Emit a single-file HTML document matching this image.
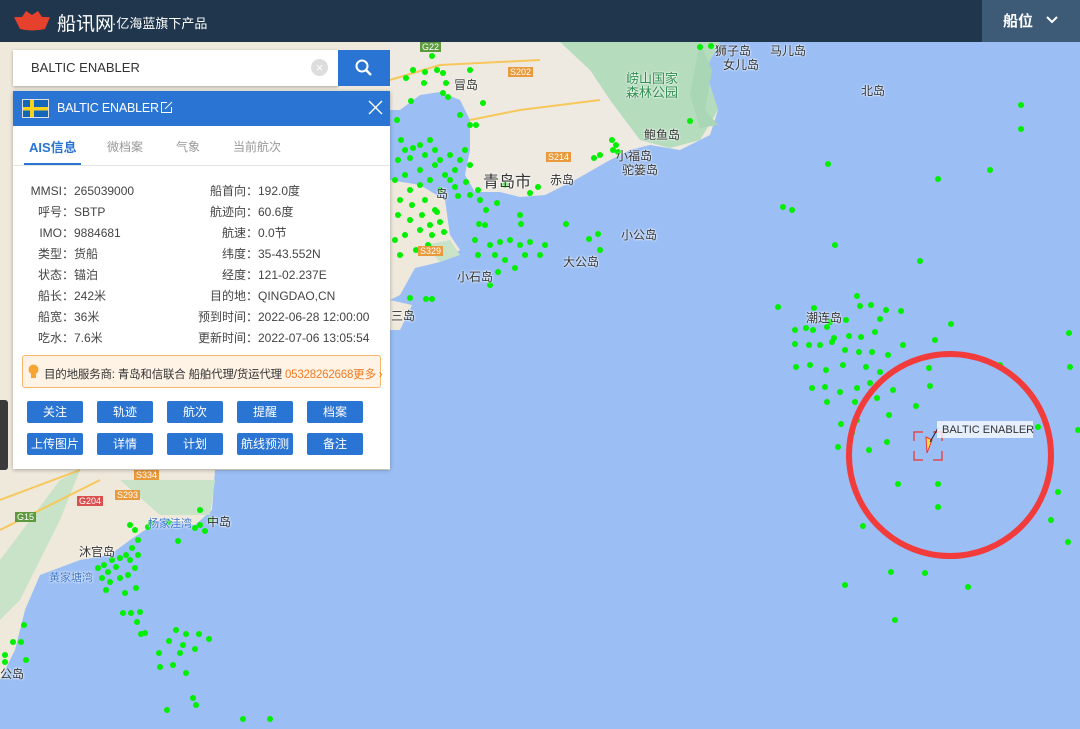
<!DOCTYPE html>
<html><head><meta charset="utf-8"><style>
*{margin:0;padding:0;box-sizing:border-box}
body{width:1080px;height:729px;overflow:hidden;position:relative;font-family:"Liberation Sans","Noto Sans CJK SC",sans-serif;background:#9bbff5}
#top{position:absolute;left:0;top:0;width:1080px;height:42px;background:#1f364c}
#map{position:absolute;left:0;top:42px}
.abs{position:absolute}
.lbl{position:absolute;font-size:12px;color:#333;text-shadow:0 0 2px #fff,0 0 2px #fff}
.btn{position:absolute;width:56px;height:22px;background:#2a74d4;color:#fff;font-size:12px;text-align:center;line-height:22px;border-radius:2px}
.row{position:absolute;font-size:12px;color:#444;white-space:nowrap}
</style></head><body>
<div id="top">
 <svg class="abs" style="left:12px;top:9px" width="40" height="22"><path d="M2 8 L10 8 L14 2 L20 6 L26 2 L30 8 L38 8 L33 20 Q20 23 8 20 Z" fill="#e5412d"/></svg>
 <div class="abs" style="left:57px;top:9px;color:#fff;font-size:19px">船讯网</div>
 <div class="abs" style="left:112px;top:13px;color:#fff;font-size:13px">·亿海蓝旗下产品</div>
 <div class="abs" style="left:982px;top:0;width:98px;height:42px;background:#3d5a76"></div>
 <div class="abs" style="left:1003px;top:10px;color:#fff;font-size:15px;font-weight:bold">船位</div>
 <svg class="abs" style="left:1045px;top:15px" width="14" height="10"><path d="M2 2 L7 7 L12 2" stroke="#fff" stroke-width="2" fill="none"/></svg>
</div>
<svg id="map" width="1080" height="687" viewBox="0 42 1080 687">
 <rect x="0" y="42" width="1080" height="687" fill="#9bbff5"/>
 <path d="M0 42 L390 42 L390 300 L412 305 L400 330 L390 330 L390 470 L215 470 L212 510 L195 525 L160 520 L130 540 L110 555 L80 560 L40 575 L25 610 L15 650 L0 680 Z" fill="#efe9dc"/>
 <path d="M0 560 L30 520 L60 480 L80 470 L60 520 L40 560 L20 600 L0 620Z" fill="#c8e3c8"/>
 <path d="M120 480 L215 480 L210 515 L160 515 Z" fill="#c8e3c8"/>
 <path d="M390 42 L720 42 L705 70 L718 110 L710 135 L680 150 L650 145 L630 150 L610 160 L575 180 L545 195 L520 197 L500 192 L475 192 L465 175 L470 150 L470 120 L460 100 L440 92 L420 95 L400 110 L390 110 Z" fill="#eeeae2"/>
 <path d="M560 42 L720 42 L705 70 L718 110 L700 140 L670 148 L640 140 L610 100 L590 70 Z" fill="#b5dcbc"/>
 <path d="M390 180 L420 185 L445 200 L450 235 L460 250 L440 262 L415 268 L400 295 L390 300Z" fill="#efe9dc"/>
 <path d="M425 245 L450 240 L460 255 L440 262 Z" fill="#c8e3c8"/>
 <path d="M700 42 L712 70 L705 110 L718 125 L700 128 L690 95Z" fill="#a9d6b4"/>
 <path d="M470 120 L520 110 L600 100" stroke="#f6c75a" stroke-width="2" fill="none"/>
 <path d="M390 80 L440 65 L540 60" stroke="#f6c75a" stroke-width="2" fill="none"/>
 <path d="M0 500 L80 470 M0 530 L100 480" stroke="#f6c75a" stroke-width="2" fill="none"/>
 <g fill="#00f000">
 <circle cx="413" cy="70" r="3"/><circle cx="425" cy="72" r="3"/><circle cx="437" cy="70" r="3"/><circle cx="443" cy="73" r="3"/><circle cx="406" cy="78" r="3"/><circle cx="424" cy="83" r="3"/><circle cx="470" cy="70" r="3"/><circle cx="432" cy="56" r="3"/><circle cx="443" cy="93" r="3"/><circle cx="448" cy="97" r="3"/><circle cx="446" cy="83" r="3"/><circle cx="411" cy="101" r="3"/><circle cx="483" cy="103" r="3"/><circle cx="476" cy="125" r="3"/><circle cx="460" cy="115" r="3"/><circle cx="470" cy="125" r="3"/><circle cx="397" cy="120" r="3"/><circle cx="401" cy="140" r="3"/><circle cx="405" cy="150" r="3"/><circle cx="413" cy="148" r="3"/><circle cx="420" cy="145" r="3"/><circle cx="430" cy="140" r="3"/><circle cx="435" cy="150" r="3"/><circle cx="425" cy="155" r="3"/><circle cx="410" cy="158" r="3"/><circle cx="398" cy="160" r="3"/><circle cx="440" cy="160" r="3"/><circle cx="450" cy="155" r="3"/><circle cx="460" cy="160" r="3"/><circle cx="465" cy="150" r="3"/><circle cx="455" cy="170" r="3"/><circle cx="445" cy="175" r="3"/><circle cx="470" cy="165" r="3"/><circle cx="435" cy="165" r="3"/><circle cx="420" cy="170" r="3"/><circle cx="405" cy="175" r="3"/><circle cx="395" cy="180" r="3"/><circle cx="410" cy="190" r="3"/><circle cx="420" cy="185" r="3"/><circle cx="430" cy="180" r="3"/><circle cx="440" cy="190" r="3"/><circle cx="400" cy="200" r="3"/><circle cx="412" cy="205" r="3"/><circle cx="425" cy="200" r="3"/><circle cx="435" cy="210" r="3"/><circle cx="398" cy="215" r="3"/><circle cx="410" cy="220" r="3"/><circle cx="422" cy="215" r="3"/><circle cx="430" cy="225" r="3"/><circle cx="440" cy="222" r="3"/><circle cx="420" cy="230" r="3"/><circle cx="405" cy="235" r="3"/><circle cx="395" cy="240" r="3"/><circle cx="432" cy="235" r="3"/><circle cx="444" cy="232" r="3"/><circle cx="428" cy="245" r="3"/><circle cx="416" cy="250" r="3"/><circle cx="400" cy="255" r="3"/><circle cx="437" cy="212" r="3"/><circle cx="455" cy="187" r="3"/><circle cx="458" cy="196" r="3"/><circle cx="466" cy="182" r="3"/><circle cx="478" cy="190" r="3"/><circle cx="485" cy="225" r="3"/><circle cx="470" cy="195" r="3"/><circle cx="497" cy="203" r="3"/><circle cx="505" cy="185" r="3"/><circle cx="530" cy="193" r="3"/><circle cx="538" cy="187" r="3"/><circle cx="475" cy="240" r="3"/><circle cx="478" cy="255" r="3"/><circle cx="490" cy="245" r="3"/><circle cx="500" cy="242" r="3"/><circle cx="510" cy="240" r="3"/><circle cx="495" cy="255" r="3"/><circle cx="505" cy="260" r="3"/><circle cx="520" cy="245" r="3"/><circle cx="530" cy="242" r="3"/><circle cx="545" cy="245" r="3"/><circle cx="525" cy="255" r="3"/><circle cx="540" cy="255" r="3"/><circle cx="515" cy="268" r="3"/><circle cx="498" cy="272" r="3"/><circle cx="490" cy="285" r="3"/><circle cx="479" cy="224" r="3"/><circle cx="486" cy="210" r="3"/><circle cx="450" cy="180" r="3"/><circle cx="520" cy="215" r="3"/><circle cx="521" cy="224" r="3"/><circle cx="566" cy="224" r="3"/><circle cx="589" cy="239" r="3"/><circle cx="598" cy="234" r="3"/><circle cx="600" cy="250" r="3"/><circle cx="480" cy="200" r="3"/><circle cx="410" cy="298" r="3"/><circle cx="426" cy="299" r="3"/><circle cx="432" cy="299" r="3"/><circle cx="612" cy="140" r="3"/><circle cx="616" cy="145" r="3"/><circle cx="613" cy="150" r="3"/><circle cx="618" cy="152" r="3"/><circle cx="600" cy="155" r="3"/><circle cx="594" cy="158" r="3"/><circle cx="700" cy="47" r="3"/><circle cx="711" cy="46" r="3"/><circle cx="690" cy="121" r="3"/>
 <circle cx="1021" cy="105" r="3"/><circle cx="1021" cy="129" r="3"/><circle cx="828" cy="164" r="3"/><circle cx="938" cy="179" r="3"/><circle cx="990" cy="170" r="3"/><circle cx="783" cy="207" r="3"/><circle cx="792" cy="210" r="3"/><circle cx="835" cy="245" r="3"/><circle cx="920" cy="261" r="3"/>
 <circle cx="778" cy="307" r="3"/><circle cx="814" cy="308" r="3"/><circle cx="857" cy="296" r="3"/><circle cx="860" cy="306" r="3"/><circle cx="871" cy="305" r="3"/><circle cx="886" cy="310" r="3"/><circle cx="901" cy="311" r="3"/><circle cx="880" cy="319" r="3"/><circle cx="846" cy="320" r="3"/><circle cx="830" cy="322" r="3"/><circle cx="795" cy="330" r="3"/><circle cx="806" cy="328" r="3"/><circle cx="813" cy="330" r="3"/><circle cx="827" cy="327" r="3"/><circle cx="834" cy="338" r="3"/><circle cx="849" cy="336" r="3"/><circle cx="861" cy="337" r="3"/><circle cx="875" cy="332" r="3"/><circle cx="903" cy="345" r="3"/><circle cx="935" cy="340" r="3"/><circle cx="951" cy="324" r="3"/><circle cx="795" cy="344" r="3"/><circle cx="809" cy="345" r="3"/><circle cx="820" cy="345" r="3"/><circle cx="832" cy="342" r="3"/><circle cx="845" cy="350" r="3"/><circle cx="859" cy="352" r="3"/><circle cx="872" cy="352" r="3"/><circle cx="888" cy="355" r="3"/><circle cx="796" cy="367" r="3"/><circle cx="810" cy="365" r="3"/><circle cx="826" cy="370" r="3"/><circle cx="843" cy="365" r="3"/><circle cx="866" cy="367" r="3"/><circle cx="880" cy="372" r="3"/><circle cx="812" cy="388" r="3"/><circle cx="825" cy="387" r="3"/><circle cx="840" cy="392" r="3"/><circle cx="857" cy="388" r="3"/><circle cx="870" cy="383" r="3"/><circle cx="893" cy="390" r="3"/><circle cx="827" cy="402" r="3"/><circle cx="855" cy="402" r="3"/><circle cx="877" cy="398" r="3"/><circle cx="929" cy="368" r="3"/><circle cx="930" cy="386" r="3"/><circle cx="1000" cy="365" r="3"/><circle cx="1069" cy="333" r="3"/><circle cx="1070" cy="367" r="3"/><circle cx="889" cy="415" r="3"/><circle cx="916" cy="406" r="3"/><circle cx="841" cy="424" r="3"/><circle cx="857" cy="420" r="3"/><circle cx="852" cy="433" r="3"/><circle cx="869" cy="450" r="3"/><circle cx="887" cy="442" r="3"/><circle cx="838" cy="447" r="3"/><circle cx="1038" cy="427" r="3"/><circle cx="898" cy="484" r="3"/><circle cx="938" cy="484" r="3"/><circle cx="938" cy="507" r="3"/><circle cx="863" cy="526" r="3"/><circle cx="1058" cy="492" r="3"/><circle cx="1051" cy="520" r="3"/><circle cx="1068" cy="542" r="3"/><circle cx="1078" cy="430" r="3"/><circle cx="891" cy="572" r="3"/><circle cx="925" cy="573" r="3"/><circle cx="968" cy="587" r="3"/><circle cx="895" cy="620" r="3"/><circle cx="845" cy="585" r="3"/>
 <circle cx="130" cy="525" r="3"/><circle cx="135" cy="530" r="3"/><circle cx="138" cy="540" r="3"/><circle cx="132" cy="548" r="3"/><circle cx="126" cy="555" r="3"/><circle cx="130" cy="560" r="3"/><circle cx="135" cy="568" r="3"/><circle cx="128" cy="575" r="3"/><circle cx="120" cy="558" r="3"/><circle cx="112" cy="560" r="3"/><circle cx="104" cy="565" r="3"/><circle cx="98" cy="568" r="3"/><circle cx="108" cy="572" r="3"/><circle cx="116" cy="567" r="3"/><circle cx="102" cy="578" r="3"/><circle cx="110" cy="582" r="3"/><circle cx="120" cy="578" r="3"/><circle cx="106" cy="590" r="3"/><circle cx="138" cy="555" r="3"/><circle cx="148" cy="527" r="3"/><circle cx="151" cy="523" r="3"/><circle cx="168" cy="522" r="3"/><circle cx="178" cy="541" r="3"/><circle cx="195" cy="528" r="3"/><circle cx="200" cy="525" r="3"/><circle cx="205" cy="531" r="3"/><circle cx="210" cy="520" r="3"/><circle cx="200" cy="510" r="3"/><circle cx="136" cy="588" r="3"/><circle cx="125" cy="593" r="3"/><circle cx="123" cy="613" r="3"/><circle cx="140" cy="612" r="3"/><circle cx="131" cy="613" r="3"/><circle cx="137" cy="622" r="3"/><circle cx="141" cy="634" r="3"/><circle cx="145" cy="633" r="3"/><circle cx="176" cy="630" r="3"/><circle cx="186" cy="634" r="3"/><circle cx="199" cy="634" r="3"/><circle cx="209" cy="639" r="3"/><circle cx="169" cy="641" r="3"/><circle cx="183" cy="645" r="3"/><circle cx="195" cy="649" r="3"/><circle cx="159" cy="653" r="3"/><circle cx="160" cy="667" r="3"/><circle cx="173" cy="665" r="3"/><circle cx="180" cy="653" r="3"/><circle cx="186" cy="673" r="3"/><circle cx="193" cy="698" r="3"/><circle cx="196" cy="705" r="3"/><circle cx="167" cy="710" r="3"/><circle cx="243" cy="719" r="3"/><circle cx="270" cy="719" r="3"/><circle cx="24" cy="625" r="3"/><circle cx="21" cy="642" r="3"/><circle cx="13" cy="642" r="3"/><circle cx="26" cy="660" r="3"/><circle cx="5" cy="655" r="3"/><circle cx="5" cy="662" r="3"/>
 </g>
 <circle cx="950" cy="455" r="101" fill="none" stroke="#f23c3c" stroke-width="6"/>
 <path d="M914 441 V432 H923 M933 432 H942 V441 M942 451 V460 H933 M923 460 H914 V451" stroke="#e14a4a" stroke-width="1.5" fill="none"/>
 <path d="M926 437 L932 440 L927 453 Z" fill="#ffe14a" stroke="#e33" stroke-width="1"/>
 <path d="M930 442 L938 428" stroke="#222" stroke-width="1"/>
 <rect x="937" y="421" width="96" height="17" fill="#fff" fill-opacity=".75"/>
 <text x="942" y="433" font-size="11" fill="#333" font-family="Liberation Sans">BALTIC ENABLER</text>
</svg>
<div class="lbl" style="left:454px;top:76px">冒岛</div>
<div class="lbl" style="left:483px;top:168px;font-size:16px">青岛市</div>
<div class="lbl" style="left:550px;top:171px">赤岛</div>
<div class="lbl" style="left:436px;top:185px">岛</div>
<div class="lbl" style="left:621px;top:226px">小公岛</div>
<div class="lbl" style="left:563px;top:253px">大公岛</div>
<div class="lbl" style="left:457px;top:268px">小石岛</div>
<div class="lbl" style="left:644px;top:126px">鲍鱼岛</div>
<div class="lbl" style="left:616px;top:147px">小福岛</div>
<div class="lbl" style="left:622px;top:161px">驼篓岛</div>
<div class="lbl" style="left:626px;top:72px;color:#2f8d4f;font-size:13px;line-height:14px">崂山国家<br>森林公园</div>
<div class="lbl" style="left:715px;top:42px">狮子岛</div>
<div class="lbl" style="left:723px;top:56px">女儿岛</div>
<div class="lbl" style="left:770px;top:42px">马儿岛</div>
<div class="lbl" style="left:861px;top:82px">北岛</div>
<div class="lbl" style="left:806px;top:309px">潮连岛</div>
<div class="lbl" style="left:79px;top:543px">沐官岛</div>
<div class="lbl" style="left:49px;top:569px;color:#3a73c9;font-size:11px">黄家塘湾</div>
<div class="lbl" style="left:207px;top:513px">中岛</div>
<div class="lbl" style="left:148px;top:515px;color:#3a73c9;font-size:11px">杨家洼湾</div>
<div class="lbl" style="left:0px;top:665px">公岛</div>
<div class="lbl" style="left:391px;top:307px">三岛</div>
<div class="abs" style="left:420px;top:42px;background:#5d9a3e;color:#fff;font-size:9px;padding:0 2px">G22</div>
<div class="abs" style="left:508px;top:67px;background:#e99a3d;color:#fff;font-size:9px;padding:0 2px">S202</div>
<div class="abs" style="left:546px;top:152px;background:#e99a3d;color:#fff;font-size:9px;padding:0 2px">S214</div>
<div class="abs" style="left:418px;top:246px;background:#e99a3d;color:#fff;font-size:9px;padding:0 2px">S329</div>
<div class="abs" style="left:134px;top:470px;background:#e99a3d;color:#fff;font-size:9px;padding:0 2px">S334</div>
<div class="abs" style="left:115px;top:490px;background:#e99a3d;color:#fff;font-size:9px;padding:0 2px">S293</div>
<div class="abs" style="left:77px;top:496px;background:#d9504f;color:#fff;font-size:9px;padding:0 2px">G204</div>
<div class="abs" style="left:15px;top:512px;background:#5d9a3e;color:#fff;font-size:9px;padding:0 2px">G15</div>
<div class="abs" style="left:0;top:400px;width:8px;height:70px;background:#3a3a3a;border-radius:0 3px 3px 0"></div>
<div class="abs" style="left:13px;top:50px;width:325px;height:36px;background:#fff;box-shadow:0 1px 3px rgba(0,0,0,.3)"></div>
<div class="abs" style="left:31px;top:60px;font-size:13px;color:#333">BALTIC ENABLER</div>
<div class="abs" style="left:311px;top:59px;width:17px;height:17px;border-radius:50%;background:#ddd;color:#fff;font-size:13px;text-align:center;line-height:17px">×</div>
<div class="abs" style="left:338px;top:50px;width:52px;height:36px;background:#2a74d4"></div>
<svg class="abs" style="left:354px;top:58px" width="20" height="20"><circle cx="8" cy="8" r="5.5" stroke="#fff" stroke-width="2" fill="none"/><path d="M12 12 L17 17" stroke="#fff" stroke-width="2.4"/></svg>
<div class="abs" style="left:13px;top:91px;width:377px;height:378px;background:#fff;box-shadow:0 1px 4px rgba(0,0,0,.3)"></div>
<div class="abs" style="left:13px;top:91px;width:377px;height:35px;background:#2a74d4"></div>
<svg class="abs" style="left:22px;top:99px" width="27" height="19"><rect x="0.5" y="0.5" width="26" height="18" fill="#1466b8" stroke="#ddd"/><rect x="8" y="1" width="4" height="17" fill="#f8d21c"/><rect x="1" y="8" width="25" height="3.5" fill="#f8d21c"/></svg>
<div class="abs" style="left:57px;top:101px;color:#fff;font-size:12.5px;letter-spacing:-0.2px">BALTIC ENABLER</div>
<svg class="abs" style="left:160px;top:101px" width="13" height="13"><path d="M7 1.5 H1.5 V11.5 H11.5 V6" stroke="#fff" fill="none"/><path d="M5 8 L12 1" stroke="#fff"/></svg>
<svg class="abs" style="left:368px;top:100px" width="15" height="15"><path d="M1 1 L14 14 M14 1 L1 14" stroke="#fff" stroke-width="1.4"/></svg>
<div class="abs" style="left:29px;top:137px;color:#2a74d4;font-size:13px;font-weight:bold">AIS信息</div>
<div class="abs" style="left:107px;top:138px;color:#999;font-size:12px">微档案</div>
<div class="abs" style="left:176px;top:138px;color:#999;font-size:12px">气象</div>
<div class="abs" style="left:233px;top:138px;color:#999;font-size:12px">当前航次</div>
<div class="abs" style="left:24px;top:163px;width:57px;height:2px;background:#2a74d4"></div>
<div class="abs" style="left:13px;top:165px;width:377px;height:1px;background:#e4e4e4"></div>
<div class="row" style="left:26px;top:181px;line-height:21px;text-align:right;width:36px">MMSI<br>呼号<br>IMO<br>类型<br>状态<br>船长<br>船宽<br>吃水</div>
<div class="row" style="left:62px;top:181px;line-height:21px">：265039000<br>：SBTP<br>：9884681<br>：货船<br>：锚泊<br>：242米<br>：36米<br>：7.6米</div>
<div class="row" style="left:190px;top:181px;line-height:21px;text-align:right;width:56px">船首向<br>航迹向<br>航速<br>纬度<br>经度<br>目的地<br>预到时间<br>更新时间</div>
<div class="row" style="left:246px;top:181px;line-height:21px">：192.0度<br>：60.6度<br>：0.0节<br>：35-43.552N<br>：121-02.237E<br>：QINGDAO,CN<br>：2022-06-28 12:00:00<br>：2022-07-06 13:05:54</div>
<div class="abs" style="left:22px;top:355px;width:359px;height:33px;background:#fff3e6;border:1px solid #f8b56b;border-radius:3px"></div>
<svg class="abs" style="left:28px;top:364px" width="11" height="16"><circle cx="5.5" cy="5.5" r="5" fill="#f7a532"/><rect x="3" y="10" width="5" height="4" fill="#f7a532"/></svg>
<div class="row" style="left:44px;top:366px;color:#333;font-size:11.5px;letter-spacing:-0.2px">目的地服务商: 青岛和信联合 船舶代理/货运代理 <span style="color:#f57a1f">05328262668更多 ›</span></div>
<div class="btn" style="left:27px;top:401px">关注</div>
<div class="btn" style="left:97px;top:401px">轨迹</div>
<div class="btn" style="left:167px;top:401px">航次</div>
<div class="btn" style="left:237px;top:401px">提醒</div>
<div class="btn" style="left:307px;top:401px">档案</div>
<div class="btn" style="left:27px;top:433px">上传图片</div>
<div class="btn" style="left:97px;top:433px">详情</div>
<div class="btn" style="left:167px;top:433px">计划</div>
<div class="btn" style="left:237px;top:433px">航线预测</div>
<div class="btn" style="left:307px;top:433px">备注</div>
</body></html>
